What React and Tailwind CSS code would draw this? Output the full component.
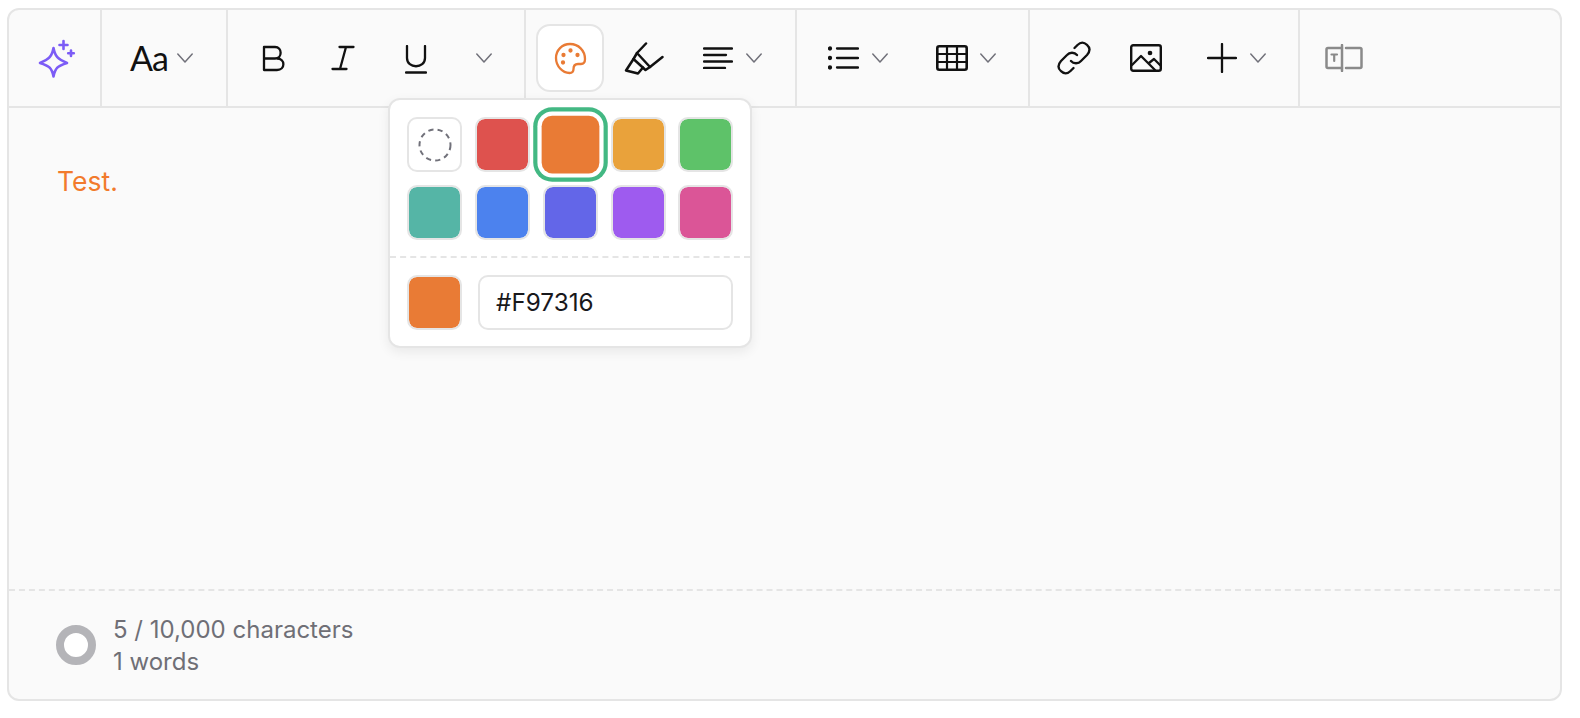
// App.jsx
import React from "react";

const Chevron = ({ className = "" }) => (
  <svg viewBox="0 0 16 10" className={`block shrink-0 w-4 h-[10px] text-[#71717a] ${className}`} fill="none" stroke="currentColor" strokeWidth="1.5" strokeLinecap="round" strokeLinejoin="round">
    <path d="M0.8 1 L8 9 L15.2 1" />
  </svg>
);

const Icon = ({ w, h, children, className = "" }) => (
  <svg width={w} height={h} viewBox={`0 0 ${w} ${h}`} className={`block shrink-0 ${className}`} fill="none" stroke="currentColor" strokeWidth="2.3" strokeLinecap="round" strokeLinejoin="round">
    {children}
  </svg>
);

const Divider = () => <div className="w-[2px] self-stretch bg-[#e5e5e5] shrink-0" />;

const swatches = [
  { color: "#de524e" },
  { color: "#e97b35", selected: true },
  { color: "#e9a23b" },
  { color: "#5ec269" },
  { color: "#55b5a6" },
  { color: "#4c82ee" },
  { color: "#6366e8" },
  { color: "#9e5bef" },
  { color: "#db5597" },
];

const ColorPopover = () => (
  <div className="absolute left-[379px] top-[88px] z-10 w-[364px] h-[250px] rounded-xl border-2 border-[#e5e5e5] bg-white shadow-[0_4px_12px_rgba(0,0,0,0.07)]">
    <div className="grid grid-cols-5 gap-x-[13.25px] gap-y-[13px] px-[17px] pt-[17px] pb-[16px]">
      <button className="w-[55px] h-[55px] rounded-[10px] border-2 border-[#e5e5e5] bg-white flex items-center justify-center">
        <svg width="34" height="34" viewBox="0 0 34 34" fill="none" stroke="#71717a" strokeWidth="2" strokeDasharray="5.2 4.2">
          <circle cx="17" cy="17" r="15.5" />
        </svg>
      </button>
      {swatches.map((s) =>
        s.selected ? (
          <button key={s.color} className="w-[55px] h-[55px] rounded-[10px] scale-[1.05] bg-[#e97b35] shadow-[0_0_0_4px_#fff,0_0_0_8px_#43b883]" />
        ) : (
          <button key={s.color} className="w-[55px] h-[55px] rounded-[10px] border-2 border-[#e5e5e5] bg-clip-padding" style={{ backgroundColor: s.color }} />
        )
      )}
    </div>
    <div className="border-t-2 border-dashed border-[#e5e5e5]" />
    <div className="flex gap-[16px] px-[17px] pt-[17px]">
      <div className="w-[55px] h-[55px] rounded-[10px] border-2 border-[#e5e5e5] bg-[#e97b35] bg-clip-padding shrink-0" />
      <div className="flex-1 h-[55px] rounded-[10px] border-2 border-[#e5e5e5] bg-white flex items-center pl-[16px] text-[24.3px] text-[#18181b]">
        #F97316
      </div>
    </div>
  </div>
);

const Toolbar = () => (
  <div className="flex h-[98px] border-b-2 border-[#e5e5e5] text-[#111]">
    <div className="w-[91px] flex items-center pl-[29px] text-[#7c5cf6]">
      <Icon w={40} h={42}>
        <path d="M15.5 11 C17.2 19.5 19.5 22 29 26 C19.5 29 17.2 31 15.5 39.5 C13.8 31 11.5 29 2 26 C11.5 22 13.8 19.5 15.5 11 Z" strokeWidth="2.6" />
        <path d="M25.5 4 V12 M21.5 8 H29.5" strokeWidth="2.6" />
        <path d="M33 13.5 V19 M30.2 16.2 H35.8" strokeWidth="2.6" />
      </Icon>
    </div>
    <Divider />
    <div className="w-[124px] flex items-center pl-[28px] gap-[9px]">
      <span className="font-['Lato',sans-serif] text-[34px] leading-none tracking-[-1px]">Aa</span>
      <Chevron />
    </div>
    <Divider />
    <div className="w-[296px] flex items-center pl-[34px]">
      <Icon w={24} h={27}>
        <path d="M2 13.5 V2 H13 C20.5 2 20.5 13.5 13 13.5 H2 V25 H15 C23.5 25 23.5 13.5 15 13.5" />
      </Icon>
      <Icon w={24} h={26} className="ml-[45px]">
        <path d="M8.5 2 H22.5 M1.5 24 H15.5 M15 2 L9 24" />
      </Icon>
      <Icon w={22} h={30} className="ml-[50px] mt-[3px]">
        <path d="M2 1 V13 C2 24 20 24 20 13 V1" />
        <path d="M1 27.5 H21" strokeWidth="2.5" />
      </Icon>
      <Chevron className="ml-[49px]" />
    </div>
    <Divider />
    <div className="w-[269px] flex items-center pl-[10px]">
      <div className="w-[68px] h-[68px] rounded-[14px] border-2 border-[#e5e5e5] bg-white flex items-center justify-center text-[#e97b35]">
        <Icon w={33} h={33}>
          <path d="M16 2 C8 2 2 8.2 2 16 C2 24 8.5 31 15.5 31 C19 31 19.5 29 19.5 27 C19.5 24 20.5 22 24 22 H27 C29.7 22 31 20 31 17 C31 8.5 24.5 2 16 2 Z" />
          <circle cx="16.5" cy="8.5" r="1" fill="currentColor" />
          <circle cx="23.5" cy="13" r="1" fill="currentColor" />
          <circle cx="9.5" cy="13" r="1" fill="currentColor" />
          <circle cx="9" cy="20.5" r="1" fill="currentColor" />
        </Icon>
      </div>
      <Icon w={40} h={33} className="ml-[20px]">
        <path d="M22 1.5 L13 11 L26 25 L38.5 15" strokeWidth="2.5" />
        <path d="M13 11 L9.5 17 L21.5 28 L26 25" strokeWidth="2.5" />
        <path d="M9.5 17 L2 28.5 L14 31.5 L19 25.5" strokeWidth="2.5" />
      </Icon>
      <Icon w={30} h={22} className="ml-[39px]">
        <path d="M1 1.5 H29 M1 8 H23 M1 14.5 H29 M1 21 H22" />
      </Icon>
      <Chevron className="ml-[13px]" />
    </div>
    <Divider />
    <div className="w-[231px] flex items-center pl-[31px]">
      <Icon w={31} h={24}>
        <path d="M9 2.5 H30 M9 12 H30 M9 21.5 H30" />
        <circle cx="2" cy="2.5" r="1" fill="currentColor" />
        <circle cx="2" cy="12" r="1" fill="currentColor" />
        <circle cx="2" cy="21.5" r="1" fill="currentColor" />
      </Icon>
      <Chevron className="ml-[13px]" />
      <Icon w={32} h={26} className="ml-[48px]">
        <rect x="1.3" y="1.3" width="29.4" height="23.4" rx="2" strokeWidth="2.6" />
        <path d="M1 9 H31 M1 17 H31 M11 1 V25 M21 1 V25" strokeWidth="2.2" />
      </Icon>
      <Chevron className="ml-[12px]" />
    </div>
    <Divider />
    <div className="w-[268px] flex items-center pl-[27px]">
      <Icon w={34} h={34}>
        <path d="M14 20 C16.5 23 21.5 23 24 20 L30 14 C33.5 10 33 6.5 30 3.8 C27 1 23.5 1 20.5 4 L17.5 7" />
        <path d="M20 14 C17.5 11 12.5 11 10 14 L4 20 C0.5 24 1 27.5 4 30.2 C7 33 10.5 33 13.5 30 L16.5 27" />
      </Icon>
      <Icon w={32} h={28} className="ml-[39px]">
        <rect x="1.2" y="1.2" width="29.6" height="25.6" rx="2" strokeWidth="2.4" />
        <circle cx="20" cy="9" r="1.2" fill="currentColor" />
        <path d="M2 21 L11 12 L25 26 M19 19 L24 15 L30 21" />
      </Icon>
      <Icon w={30} h={30} className="ml-[45px]">
        <path d="M15 1 V29 M1 15 H29" />
      </Icon>
      <Chevron className="ml-[13px]" />
    </div>
    <Divider />
    <div className="flex items-center pl-[25px] text-[#8a8a8a]">
      <Icon w={38} h={28}>
        <path d="M17 4 H3 Q1.5 4 1.5 5.5 V22.5 Q1.5 24 3 24 H17" strokeWidth="2.5" />
        <path d="M21 4 H35 Q36.5 4 36.5 5.5 V22.5 Q36.5 24 35 24 H21" strokeWidth="2.5" />
        <path d="M17 1 V27" strokeWidth="2.5" />
        <path d="M6.5 10.5 H12 M9.2 10.5 V17" strokeWidth="2.2" />
      </Icon>
    </div>
  </div>
);

const Footer = () => (
  <div className="flex-1 border-t-2 border-dashed border-[#e5e5e5] flex items-center pl-[47px] gap-[17px] pb-[1px]">
    <div className="w-10 h-10 rounded-full border-[8px] border-[#b4b4b8] bg-white" />
    <div className="mt-[2px] text-[24px] leading-[32px] text-[#6f6f76]">
      <div>5 / 10,000 characters</div>
      <div>1 words</div>
    </div>
  </div>
);

export default function App() {
  return (
    <div className="h-[718px] bg-white pt-[8px] pl-[7px] pr-[18px] pb-[17px] font-['Inter',sans-serif]">
      <div className="relative h-full flex flex-col rounded-xl border-2 border-[#e5e5e5] bg-[#fafafa]">
        <Toolbar />
        <div className="h-[481px] pl-[48px] pt-[56px] text-[26.5px] leading-[34px] text-[#f27a2c]">Test.</div>
        <Footer />
        <ColorPopover />
      </div>
    </div>
  );
}
